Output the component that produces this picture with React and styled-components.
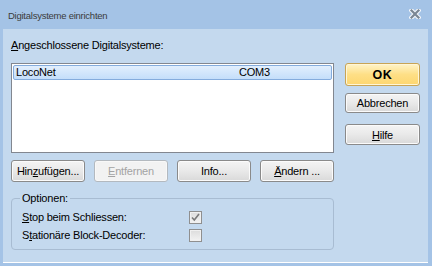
import React from "react";
import styled, { createGlobalStyle } from "styled-components";

const GlobalStyle = createGlobalStyle`
  body {
    margin: 0;
    font-family: "Liberation Sans", Arial, sans-serif;
  }
`;

const Window = styled.div`
  width: 432px;
  height: 266px;
  box-sizing: border-box;
  padding: 0 4px 3px 3px;
  background: #a4c3e6;
  display: flex;
  flex-direction: column;
`;

const TitleBar = styled.div`
  height: 29px;
  display: flex;
  align-items: center;
  justify-content: space-between;
  padding: 1px 7px 0 5px;
  box-sizing: border-box;
  font-size: 9.5px;
  letter-spacing: -0.25px;
  color: #3b3b3b;
`;

const Close = styled.svg`
  width: 12px;
  height: 10px;
  margin-top: -3px;
`;

const Content = styled.div`
  flex: 1;
  background: #c4d9ee;
  border-bottom: 1px solid #ffffff;
  padding: 9px 8px 0 8px;
  display: flex;
  gap: 11px;
  font-size: 11px;
  letter-spacing: -0.2px;
  color: #000;
`;

const LeftCol = styled.div`
  width: 323px;
  display: flex;
  flex-direction: column;
`;

const RightCol = styled.div`
  width: 75px;
  padding-top: 25px;
  display: flex;
  flex-direction: column;
`;

const Label = styled.div`
  height: 14px;
  line-height: 14px;
  margin-bottom: 11px;
`;

const Key = styled.span`
  text-decoration: underline;
  text-underline-offset: 1px;
`;

const ListBox = styled.div`
  height: 90px;
  box-sizing: border-box;
  border: 1px solid #828790;
  background: #ffffff;
  padding: 1px;
`;

const ListRow = styled.div`
  height: 15px;
  box-sizing: border-box;
  border: 1px solid #84acdd;
  border-radius: 2px;
  background: linear-gradient(#e2effd, #c4defa);
  display: flex;
  align-items: center;
  padding-left: 2px;
  line-height: 13px;
`;

const Cell = styled.span`
  width: ${(p) => p.$w}px;
`;

const ButtonRow = styled.div`
  margin-top: 7px;
  display: grid;
  grid-template-columns: repeat(4, 1fr);
  gap: 9px;
`;

const Button = styled.button`
  height: ${(p) => p.$h || 22}px;
  margin-top: ${(p) => p.$mt || 0}px;
  box-sizing: border-box;
  padding: 0;
  border: 1px solid ${(p) => (p.$primary ? "#c8a455" : p.disabled ? "#b3b9bf" : "#8a8a8a")};
  border-radius: 3px;
  background: ${(p) =>
    p.$primary
      ? "linear-gradient(#fff4c8, #fedf86 50%, #fdd66f)"
      : p.disabled
      ? "#f2f2f2"
      : "linear-gradient(#f4f4f4, #e9e9e9 50%, #d9d9d9)"};
  box-shadow: inset 0 0 0 1px ${(p) => (p.disabled ? "#f8f8f8" : p.$primary ? "#fff6d6" : "#fbfbfb")};
  color: ${(p) => (p.disabled ? "#a3a3a3" : "#000")};
  font-family: "Liberation Sans", Arial, sans-serif;
  font-size: ${(p) => (p.$primary ? "12.5px" : "11px")};
  font-weight: ${(p) => (p.$primary ? 700 : 400)};
  letter-spacing: ${(p) => (p.$primary ? "0.6px" : "-0.2px")};
`;

const Group = styled.fieldset`
  margin: 10px 0 0 0;
  padding: 0 10px 7px 10px;
  border: 1px solid #a8bcd2;
  border-radius: 4px;
  display: flex;
  flex-direction: column;
  gap: 5px;
`;

const Legend = styled.legend`
  padding: 0 2px;
  margin-left: -2px;
  line-height: 13px;
  margin-bottom: 6px;
`;

const OptionRow = styled.div`
  display: grid;
  grid-template-columns: 167px 13px;
  align-items: center;
  height: 13px;
  line-height: 13px;
`;

const Check = styled.span`
  width: 13px;
  height: 13px;
  box-sizing: border-box;
  border: 1px solid #8f8f8f;
  background: linear-gradient(#dcdcdc, #f3f3f3);
  box-shadow: inset 0 0 0 1px #f0f0f0;
  display: flex;
  align-items: center;
  justify-content: center;
`;

function CheckBox({ checked }) {
  return (
    <Check>
      {checked && (
        <svg width="9" height="9" viewBox="0 0 9 9">
          <path d="M1 4.5 L3.3 7 L8 1" fill="none" stroke="#7a7a7a" strokeWidth="1.6" />
        </svg>
      )}
    </Check>
  );
}

export default function App() {
  return (
    <>
      <GlobalStyle />
      <Window>
        <TitleBar>
          <span>Digitalsysteme einrichten</span>
          <Close viewBox="0 0 12 10">
            <path d="M2.5 1.5 L9.5 8.5 M9.5 1.5 L2.5 8.5" stroke="#f4f7fb" strokeWidth="4.4" strokeLinecap="square" />
            <path d="M2.5 1.5 L9.5 8.5 M9.5 1.5 L2.5 8.5" stroke="#7b8794" strokeWidth="2.2" strokeLinecap="square" />
          </Close>
        </TitleBar>
        <Content>
          <LeftCol>
            <Label>
              <Key>A</Key>ngeschlossene Digitalsysteme:
            </Label>
            <ListBox>
              <ListRow>
                <Cell $w={223}>LocoNet</Cell>
                <Cell $w={60}>COM3</Cell>
              </ListRow>
            </ListBox>
            <ButtonRow>
              <Button>
                Hin<Key>z</Key>ufügen...
              </Button>
              <Button disabled>
                <Key>E</Key>ntfernen
              </Button>
              <Button>Info...</Button>
              <Button>
                <Key>Ä</Key>ndern ...
              </Button>
            </ButtonRow>
            <Group>
              <Legend>Optionen:</Legend>
              <OptionRow>
                <span>
                  <Key>S</Key>top beim Schliessen:
                </span>
                <CheckBox checked />
              </OptionRow>
              <OptionRow>
                <span>
                  S<Key>t</Key>ationäre Block-Decoder:
                </span>
                <CheckBox />
              </OptionRow>
            </Group>
          </LeftCol>
          <RightCol>
            <Button $primary $h={23}>OK</Button>
            <Button $h={20} $mt={7}>Abbrechen</Button>
            <Button $h={21} $mt={11}>
              <Key>H</Key>ilfe
            </Button>
          </RightCol>
        </Content>
      </Window>
    </>
  );
}
